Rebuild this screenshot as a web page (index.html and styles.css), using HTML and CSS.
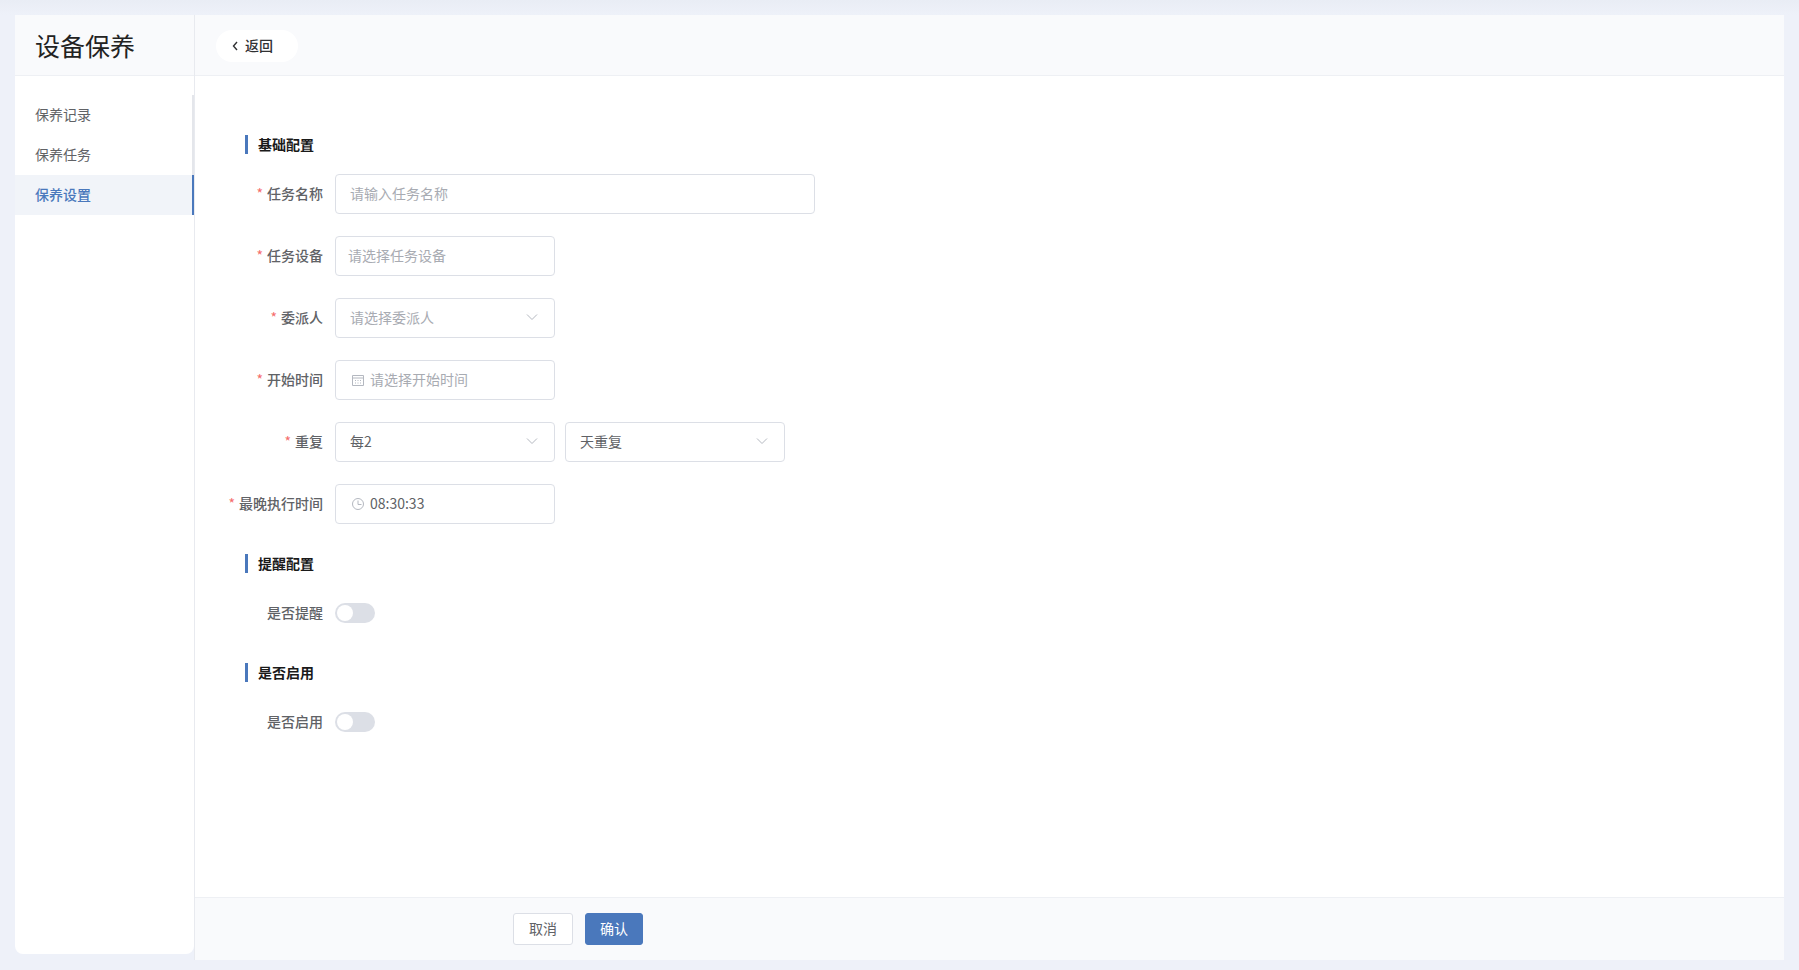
FILE: index.html
```html
<!DOCTYPE html>
<html lang="zh-CN">
<head>
    <meta charset="UTF-8">
    <meta name="viewport" content="width=device-width, initial-scale=1.0">
    <title>设备保养</title>
    <link rel="stylesheet" href="styles.css">
</head>
<body>
    <aside class="sidebar">
        <div class="sidebar-title">设备保养</div>
        <nav class="menu">
            <a class="menu-item">保养记录</a>
            <a class="menu-item">保养任务</a>
            <a class="menu-item active">保养设置</a>
        </nav>
    </aside>

    <main class="main">
        <header class="topbar">
            <button class="back-btn" type="button">
                <svg class="back-icon" viewBox="0 0 8 12" width="8" height="12"><path d="M6 2 L2.5 6 L6 10" fill="none" stroke="#303133" stroke-width="1.4"/></svg>
                返回
            </button>
        </header>

        <form class="content">
            <h3 class="section-title">基础配置</h3>
            <div class="form-row">
                <label class="form-label required">任务名称</label>
                <div class="field field-wide"><span class="placeholder">请输入任务名称</span></div>
            </div>
            <div class="form-row">
                <label class="form-label required">任务设备</label>
                <div class="field field-device"><span class="placeholder">请选择任务设备</span></div>
            </div>
            <div class="form-row">
                <label class="form-label required">委派人</label>
                <div class="field">
                    <span class="placeholder">请选择委派人</span>
                    <svg class="chevron" viewBox="0 0 12 8" width="12" height="8"><path d="M1 1.5 L6 6.5 L11 1.5" fill="none" stroke="#b4b8c0" stroke-width="1"/></svg>
                </div>
            </div>
            <div class="form-row">
                <label class="form-label required">开始时间</label>
                <div class="field">
                    <svg class="field-icon" viewBox="0 0 14 14" width="14" height="14"><path d="M1.5 2.5 H12.5 V12.5 H1.5 Z M1.5 5 H12.5" fill="none" stroke="#b4b8c0" stroke-width="1"/><path d="M4 7.5 H5 M6.5 7.5 H7.5 M9 7.5 H10 M4 10 H5 M6.5 10 H7.5 M9 10 H10" fill="none" stroke="#b4b8c0" stroke-width="1"/></svg>
                    <span class="placeholder">请选择开始时间</span>
                </div>
            </div>
            <div class="form-row">
                <label class="form-label required">重复</label>
                <div class="field">
                    <span class="value">每2</span>
                    <svg class="chevron" viewBox="0 0 12 8" width="12" height="8"><path d="M1 1.5 L6 6.5 L11 1.5" fill="none" stroke="#b4b8c0" stroke-width="1"/></svg>
                </div>
                <div class="field">
                    <span class="value">天重复</span>
                    <svg class="chevron" viewBox="0 0 12 8" width="12" height="8"><path d="M1 1.5 L6 6.5 L11 1.5" fill="none" stroke="#b4b8c0" stroke-width="1"/></svg>
                </div>
            </div>
            <div class="form-row">
                <label class="form-label required">最晚执行时间</label>
                <div class="field">
                    <svg class="field-icon" viewBox="0 0 14 14" width="14" height="14"><circle cx="7" cy="7" r="5.5" fill="none" stroke="#b4b8c0" stroke-width="1"/><path d="M7 3.5 V7.5 H10.5" fill="none" stroke="#b4b8c0" stroke-width="1"/></svg>
                    <span class="value">08:30:33</span>
                </div>
            </div>

            <h3 class="section-title section-next">提醒配置</h3>
            <div class="form-row">
                <label class="form-label">是否提醒</label>
                <span class="switch"></span>
            </div>

            <h3 class="section-title section-next">是否启用</h3>
            <div class="form-row">
                <label class="form-label">是否启用</label>
                <span class="switch"></span>
            </div>
        </form>

        <footer class="footer">
            <button class="btn" type="button">取消</button>
            <button class="btn btn-primary" type="button">确认</button>
        </footer>
    </main>
</body>
</html>
```

FILE: styles.css
```css
* {
    box-sizing: border-box;
}
html, body {
    height: 100%;
    overflow: hidden;
}
body {
    display: flex;
    margin: 0;
    padding: 15px 15px 10px;
    background: linear-gradient(#e9edf5 0, #eef1f9 15px);
    font-family: "Noto Sans CJK SC", "Noto Sans", sans-serif;
    font-size: 14px;
    line-height: 20px;
    color: #606266;
}
.sidebar {
    width: 179px;
    height: 939px;
    flex-shrink: 0;
    background: #fff;
    border-radius: 0 0 8px 8px;
    overflow: hidden;
}
.sidebar-title {
    height: 61px;
    padding-left: 20px;
    background: #f9fafc;
    border-bottom: 1px solid #eef0f4;
    font-size: 25px;
    line-height: 61px;
    color: #222;
}
.menu {
    padding-top: 19px;
}
.menu-item {
    display: block;
    height: 40px;
    padding-left: 20px;
    line-height: 38px;
    border-right: 2px solid #e4e6eb;
    color: #606266;
}
.menu-item.active {
    background: #f1f4f9;
    border-right-color: #4a78bc;
    color: #4a78bc;
    font-weight: 500;
}
.main {
    flex: 1;
    display: flex;
    flex-direction: column;
    background: #fff;
    border-left: 1px solid #e8eaef;
}
.topbar {
    height: 61px;
    padding: 15px 21px;
    background: #f9fafc;
    border-bottom: 1px solid #eef0f4;
}
.back-btn {
    display: flex;
    align-items: center;
    gap: 6px;
    width: 82px;
    height: 32px;
    padding: 0 0 2px 15px;
    background: #fff;
    border: none;
    border-radius: 16px;
    font-family: inherit;
    font-size: 14px;
    font-weight: 500;
    color: #303133;
}
.back-icon {
    margin-top: 2px;
}
.content {
    flex: 1;
    padding-top: 59px;
}
.section-title {
    height: 19px;
    margin: 0 0 20px 50px;
    padding-left: 10px;
    border-left: 3px solid #4a78bc;
    font-size: 14px;
    font-weight: 700;
    line-height: 18px;
    color: #1a1a1a;
}
.section-next {
    margin-top: 30px;
}
.form-row {
    display: flex;
    align-items: center;
    height: 40px;
    margin-bottom: 22px;
}
.form-row:has(+ .section-next) {
    margin-bottom: 0;
}
.form-label {
    width: 140px;
    padding: 0 12px 2px 0;
    text-align: right;
    font-weight: 500;
}
.required::before {
    content: "*";
    margin-right: 4px;
    color: #f56c6c;
    font-weight: 400;
}
.field {
    display: flex;
    align-items: center;
    width: 220px;
    height: 40px;
    padding: 0 16px 2px 14px;
    background: #fff;
    border: 1px solid #dcdfe6;
    border-radius: 4px;
}
.field + .field {
    margin-left: 10px;
}
.field-wide {
    width: 480px;
}
.field-device {
    padding-left: 12px;
}
.placeholder {
    color: #a8abb2;
}
.value {
    color: #606266;
}
.chevron {
    margin-left: auto;
}
.field-icon {
    flex-shrink: 0;
    margin: 2px 5px 0 1px;
}
.switch {
    position: relative;
    display: block;
    width: 40px;
    height: 20px;
    background: #dcdfe6;
    border-radius: 10px;
}
.switch::after {
    content: "";
    position: absolute;
    top: 2px;
    left: 2px;
    width: 16px;
    height: 16px;
    background: #fff;
    border-radius: 50%;
}
.footer {
    display: flex;
    gap: 12px;
    height: 63px;
    padding: 15px 0 0 318px;
    background: #f9fafc;
    border-top: 1px solid #eef0f4;
}
.btn {
    width: 60px;
    height: 32px;
    padding: 0 0 2px;
    background: #fff;
    border: 1px solid #dcdfe6;
    border-radius: 3px;
    font-family: inherit;
    font-size: 14px;
    color: #606266;
}
.btn-primary {
    width: 58px;
    background: #4a78bc;
    border-color: #4a78bc;
    color: #fff;
}
```
